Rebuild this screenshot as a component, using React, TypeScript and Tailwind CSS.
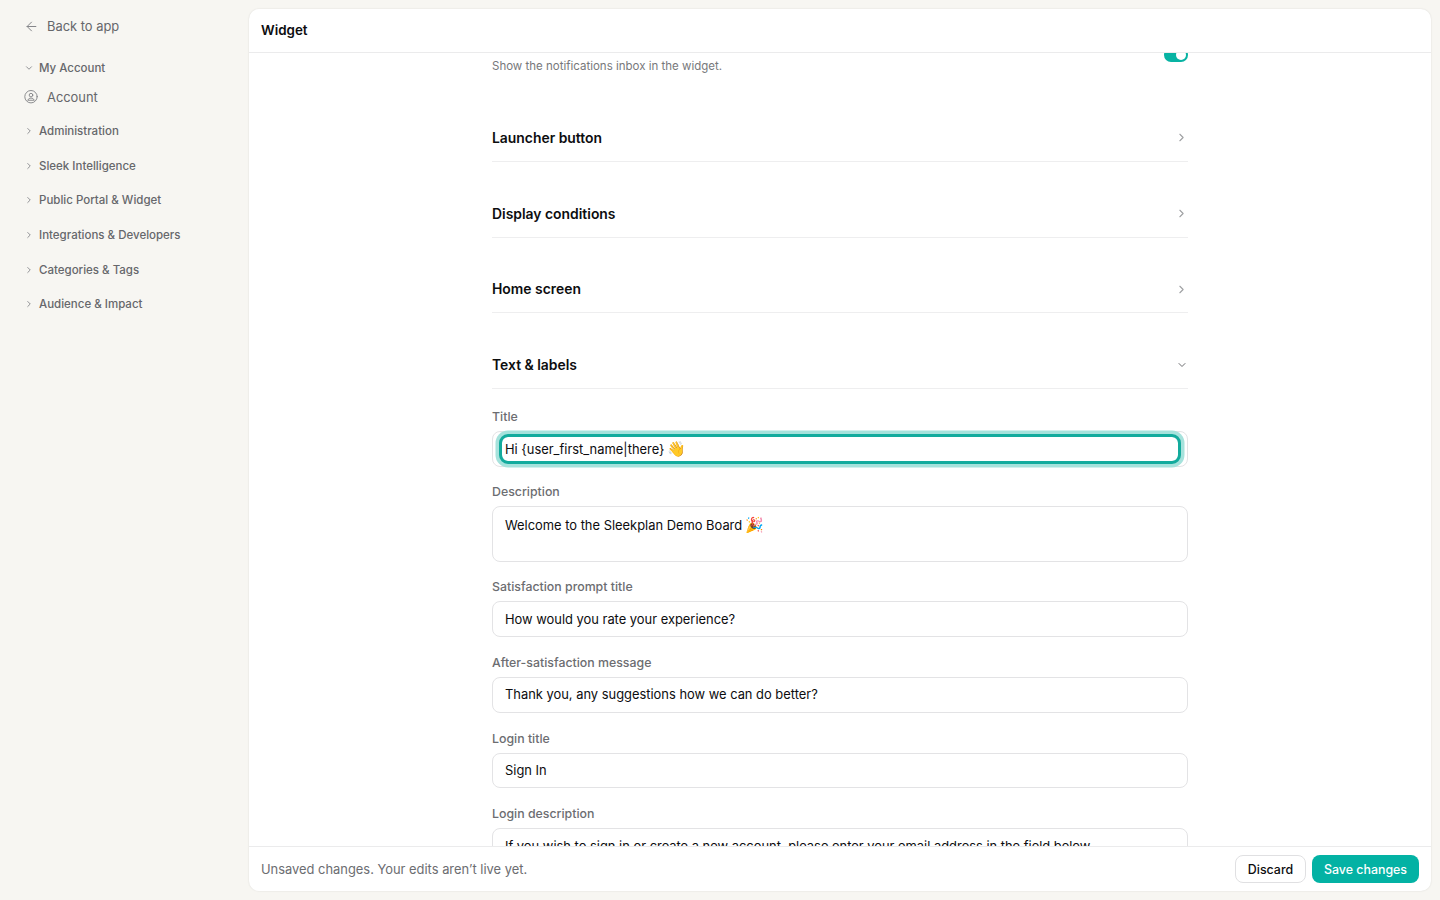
import { ArrowLeft, ChevronDown, ChevronRight } from "lucide-react"

const groups = [
  "Administration",
  "Sleek Intelligence",
  "Public Portal & Widget",
  "Integrations & Developers",
  "Categories & Tags",
  "Audience & Impact",
]

const sections = [
  { title: "Launcher button", open: false },
  { title: "Display conditions", open: false },
  { title: "Home screen", open: false },
  { title: "Text & labels", open: true },
]

const fields = [
  { label: "Satisfaction prompt title", value: "How would you rate your experience?" },
  { label: "After-satisfaction message", value: "Thank you, any suggestions how we can do better?" },
  { label: "Login title", value: "Sign In" },
  { label: "Login description", value: "If you wish to sign in or create a new account, please enter your email address in the field below." },
]

function UserIcon() {
  return (
    <svg width="14" height="14" viewBox="0 0 14 14" fill="none" stroke="currentColor" strokeWidth="0.9" strokeLinecap="round" strokeLinejoin="round" className="text-[#808185]">
      <circle cx="7" cy="6.7" r="6.2" />
      <circle cx="7" cy="5.1" r="1.8" />
      <path d="M3.9 9.9c.5-1.2 1.7-1.8 3.1-1.8s2.6.6 3.1 1.8z" />
    </svg>
  )
}

function Sidebar() {
  return (
    <aside className="w-[248px] shrink-0 pl-6 pt-4 text-[#66676b]">
      <div className="flex h-5 items-center gap-2 text-[12.9px]">
        <ArrowLeft size={15} strokeWidth={1.6} className="text-[#85868a]" />
        <span className="pt-px">Back to app</span>
      </div>
      <div className="mt-[22px] flex h-5 items-center gap-[5px] text-[11.5px] font-medium">
        <ChevronDown size={10} strokeWidth={2.2} className="text-[#88898d]" />
        <span className="pt-px">My Account</span>
      </div>
      <div className="mt-[9px] flex h-5 items-center gap-[9px] text-[12.9px]">
        <UserIcon />
        <span className="pt-px">Account</span>
      </div>
      <div className="mt-[7px]">
        {groups.map((name) => (
          <div key={name} className="flex h-[34.6px] items-center gap-[5px] text-[11.5px] font-medium">
            <ChevronRight size={10} strokeWidth={2.2} className="text-[#88898d]" />
            <span className="pt-px">{name}</span>
          </div>
        ))}
      </div>
    </aside>
  )
}

function SectionHeader({ title, open }: { title: string; open: boolean }) {
  return (
    <div className="flex h-[75.7px] items-end border-b border-[#eeeeef]">
      <div className="flex h-[46px] w-full items-center justify-between">
        <h2 className="pt-px text-[13.9px] font-semibold text-[#0d0d0f]">{title}</h2>
        {open ? (
          <ChevronDown size={12} strokeWidth={2} className="text-[#6c6d70]" />
        ) : (
          <ChevronRight size={13} strokeWidth={2} className="text-[#9fa0a3]" />
        )}
      </div>
    </div>
  )
}

function Label({ text }: { text: string }) {
  return <div className="mb-[5px] h-5 text-[12.35px] font-medium leading-[21px] text-[#6c6d71]">{text}</div>
}

export default function App() {
  return (
    <div className="flex h-[900px] w-[1440px] overflow-hidden bg-[#f7f6f2] font-['Inter',sans-serif]">
      <Sidebar />
      <main className="mb-[9px] mr-[9px] mt-[9px] ml-px flex flex-1 flex-col overflow-hidden rounded-[10px] bg-white shadow-[0_0_2px_rgba(0,0,0,0.12)]">
        <header className="flex h-11 shrink-0 items-center border-b border-[#ebebec] px-3">
          <h1 className="text-[13.4px] font-semibold text-[#0d0d0f]">Widget</h1>
        </header>

        <div className="min-h-0 flex-1 overflow-hidden">
          <div className="mx-auto w-[696px]">
            <div className="flex h-[33.2px] items-start justify-between">
              <p className="mt-1 text-[11.5px] leading-[18px] text-[#77787b]">Show the notifications inbox in the widget.</p>
              <div className="-mt-[5px] flex h-[14px] w-6 items-center justify-end rounded-full bg-[#08b3a3] pr-[2px]">
                <div className="size-[10px] rounded-full bg-white" />
              </div>
            </div>

            {sections.map((s) => (
              <SectionHeader key={s.title} title={s.title} open={s.open} />
            ))}

            <div className="pt-[17.4px]">
              <Label text="Title" />
              <div className="mb-[14.5px] h-[35.6px] rounded-lg border border-[#e3e3e5] px-[9px] py-[5px]">
                <div className="flex h-[24px] items-center rounded-[6px] px-[3px] text-[12.9px] text-[#0d0d0f] outline-[3px] outline-[#13ab9d] shadow-[0_0_0_6.5px_#a6e2dc]">
                  Hi {"{user_first_name|there}"} <span className="ml-[2px] text-[15px]">👋</span>
                </div>
              </div>

              <Label text="Description" />
              <div className="mb-[14.3px] h-[55.6px] rounded-lg border border-[#e3e3e5] px-3 pt-[9px] text-[12.9px] leading-5 text-[#0d0d0f]">
                Welcome to the Sleekplan Demo Board <span className="-ml-px text-[15px] leading-none">🎉</span>
              </div>

              {fields.map((f) => (
                <div key={f.label}>
                  <Label text={f.label} />
                  <div className="mb-[15px] flex h-[35.6px] items-center rounded-lg border border-[#e3e3e5] px-3 pt-[0.8px] text-[12.9px] whitespace-nowrap text-[#0d0d0f]">
                    {f.value}
                  </div>
                </div>
              ))}
            </div>
          </div>
        </div>

        <footer className="flex h-[45px] shrink-0 items-center justify-between border-t border-[#ebebec] px-3">
          <p className="pt-px text-[12.9px] text-[#6c6d71]">Unsaved changes. Your edits aren’t live yet.</p>
          <div className="flex gap-[6px]">
            <button className="h-7 w-[71px] rounded-lg border border-[#e0e0e2] pt-[2px] text-[12.4px] font-medium text-[#0d0d0f]">Discard</button>
            <button className="h-7 w-[107px] rounded-lg bg-[#03b2a4] pt-[2px] text-[12.4px] font-medium text-white">Save changes</button>
          </div>
        </footer>
      </main>
    </div>
  )
}
